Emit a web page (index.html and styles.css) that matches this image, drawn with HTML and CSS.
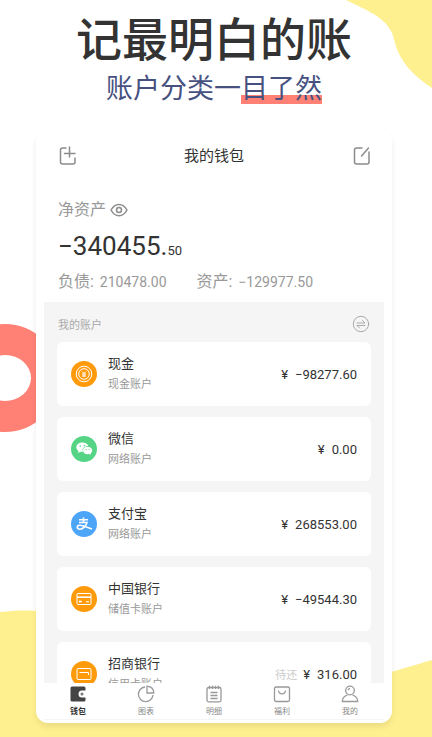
FILE: index.html
```html
<!DOCTYPE html>
<html lang="zh-CN">
<head>
<meta charset="utf-8">
<meta name="viewport" content="width=device-width, initial-scale=1">
<title>我的钱包</title>
<link rel="stylesheet" href="styles.css">
</head>
<body>
<svg class="deco deco-top" viewBox="0 0 86 88" aria-hidden="true"><path d="M0 0C13 7 38 15 46 33C50 42 49 64 86 88V0Z"/></svg>
<svg class="deco deco-ring" viewBox="0 0 60 108" aria-hidden="true"><path fill-rule="evenodd" d="M5 0a54 54 0 0 1 0 108a54 54 0 0 1 0-108ZM5 31a26 23 0 0 0 0 46a26 23 0 0 0 0-46Z"/></svg>
<svg class="deco deco-bottom" viewBox="0 0 432 127" preserveAspectRatio="none" aria-hidden="true"><path d="M0 2C24-1 48 0 70 8C150 40 220 80 300 80C345 78 390 62 432 50V127H0Z"/></svg>

<header class="hero">
  <h1>记最明白的账</h1>
  <p>账户分类一<span class="marked">目了然</span></p>
</header>

<main class="phone">
  <div class="screen">
    <div class="topbar">
      <button type="button" aria-label="添加账户">
        <svg class="line" width="18" height="20" viewBox="-2 0 18 20"><path d="M6 2H2.500Q.5 2 .5 4V16Q.5 18 2.500 18H13Q15 18 15 16V12M9.500 1V11M4.500 7.500H15"/></svg>
      </button>
      <h2>我的钱包</h2>
      <button type="button" aria-label="编辑">
        <svg class="line" width="18" height="20" viewBox="0 0 18 20"><path d="M10 2H4.500Q2.500 2 2.500 4V16Q2.500 18 4.500 18H15Q17 18 17 16V6M9.500 10L16.500 2"/></svg>
      </button>
    </div>

    <section class="summary">
      <div class="label">净资产
        <button type="button" aria-label="隐藏金额">
          <svg class="line eye" width="18" height="14" viewBox="0 0 18 14"><path d="M1 7C5-.5 13-.5 17 7C13 14.500 5 14.500 1 7Z"/><circle cx="9" cy="7" r="2.500"/></svg>
        </button>
      </div>
      <div class="total">−340455.<small>50</small></div>
      <div class="split">
        <span>负债: <b>210478.00</b></span>
        <span>资产: <b>−129977.50</b></span>
      </div>
    </section>

    <section class="accounts">
      <div class="accounts-head">
        <h3>我的账户</h3>
        <button type="button" aria-label="转账">
          <svg class="line swap" width="18" height="18" viewBox="0 0 18 18"><circle cx="9" cy="9" r="7.700"/><path d="M5 8H13L10.500 5.500M13 10.500H5L7.500 13"/></svg>
        </button>
      </div>
      <ul>
        <li>
          <svg class="badge orange" viewBox="0 0 26 26"><circle class="disc" cx="13" cy="13" r="13"/><circle cx="13" cy="13" r="7.800"/><circle cx="13" cy="13" r="5.300"/><path d="M11 10.500L13 12.500L15 10.500M11 13H15M11 15H15M13 12.500V16"/></svg>
          <div class="name"><strong>现金</strong><span>现金账户</span></div>
          <div class="amount"><i>¥</i>−98277.60</div>
        </li>
        <li>
          <svg class="badge green" viewBox="0 0 26 26"><circle class="disc" cx="13" cy="13" r="13"/><path class="solid" d="M11.500 6.500C8 6.500 5.300 8.600 5.300 11.300C5.300 12.800 6.200 14.100 7.500 15L7 17L9.300 15.800L11.800 16C10.900 12.500 13.500 10 17.300 10C16.600 8 14.400 6.500 11.500 6.500Z"/><path class="solid" d="M16.500 10.700C13.800 10.700 12 12.300 12 14.400C12 16.500 14 18.200 16.600 18.200L18.300 17.900L20 18.800L19.600 17.200C20.600 16.500 21.200 15.500 21.200 14.400C21.200 12.300 19.200 10.700 16.500 10.700Z"/><g class="dots"><circle cx="9.300" cy="10" r=".8"/><circle cx="13.300" cy="9.600" r=".8"/><circle cx="15.100" cy="13.500" r=".6"/><circle cx="18.200" cy="13.500" r=".6"/></g></svg>
          <div class="name"><strong>微信</strong><span>网络账户</span></div>
          <div class="amount"><i>¥</i>0.00</div>
        </li>
        <li>
          <svg class="badge blue" viewBox="0 0 26 26"><circle class="disc" cx="13" cy="13" r="13"/><path class="thick" d="M8 8.800H17M12.500 6.500V11.500M8 11.500H16C15 15 12 18.200 9 18.200C5.500 18.200 5.300 14.500 8.800 14.300C12 14.200 16 16.500 21 18"/></svg>
          <div class="name"><strong>支付宝</strong><span>网络账户</span></div>
          <div class="amount"><i>¥</i>268553.00</div>
        </li>
        <li>
          <svg class="badge orange" viewBox="0 0 26 26"><circle class="disc" cx="13" cy="13" r="13"/><rect x="6" y="7.500" width="14" height="11" rx="1"/><path class="thick" d="M6 11.200H20"/><path d="M15 15.800H18M9 14.200V16.800M7.800 15.500H11"/></svg>
          <div class="name"><strong>中国银行</strong><span>储值卡账户</span></div>
          <div class="amount"><i>¥</i>−49544.30</div>
        </li>
        <li>
          <svg class="badge orange" viewBox="0 0 26 26"><circle class="disc" cx="13" cy="13" r="13"/><rect x="6" y="7.500" width="14" height="11" rx="1"/><path d="M8.500 11.500H17.500V14"/></svg>
          <div class="name"><strong>招商银行</strong><span>信用卡账户</span></div>
          <div class="amount"><em>待还</em><i>¥</i>316.00</div>
        </li>
      </ul>
    </section>

    <nav class="tabs">
      <a class="active" href="#wallet"><svg viewBox="0 0 18 18"><path class="wallet" d="M3 1.500H15Q16.500 1.500 16.500 3V5.500H13A3.500 3.500 0 0 0 13 12.500H16.500V15Q16.500 16.500 15 16.500H3Q1.500 16.500 1.500 15V3Q1.500 1.500 3 1.500Z"/><circle class="clasp" cx="13" cy="9" r="1.500"/></svg>钱包</a>
      <a href="#charts"><svg viewBox="0 0 18 18"><path d="M8 2A7.300 7.300 0 1 0 16 10M10 1.200V8H16.800Q16.800 2 10 1.200Z"/></svg>图表</a>
      <a href="#details"><svg viewBox="0 0 18 18"><rect x="2" y="2.500" width="14" height="14.300" rx="1.500"/><path d="M4.500.8V4M7.500.8V4M10.500.8V4M13.500.8V4M5.500 7.500H12.500M5.500 10.500H12.500M5.500 13.500H12.500"/></svg>明细</a>
      <a href="#benefits"><svg viewBox="0 0 18 18"><rect x="1.500" y="2" width="15" height="14.500" rx="1.500"/><path d="M5.500 5.500C6 10 12 10 12.500 5.500"/></svg>福利</a>
      <a href="#me"><svg viewBox="0 0 18 18"><circle cx="9" cy="5.500" r="4.300"/><path d="M6.500 10Q1.500 11.500 1.300 16.500H16.700Q16.500 11.500 11.500 10M7 5Q7.500 3.500 9 3.300"/></svg>我的</a>
    </nav>
  </div>
</main>
</body>
</html>
```
FILE: styles.css
```css
* { box-sizing: border-box; }

body {
  margin: 0;
  height: 100vh;
  display: flex;
  flex-direction: column;
  position: relative;
  overflow: hidden;
  background: #fff;
  color: #333;
  font-family: Roboto, "Noto Sans CJK SC", sans-serif;
}

h1, h2, h3, p, ul { margin: 0; padding: 0; }
button {
  display: flex;
  padding: 0;
  border: 0;
  background: none;
}
svg { display: block; }

.deco { position: absolute; z-index: -1; fill: #fff08f; }
.deco-top { top: 0; right: 0; width: 86px; }
.deco-ring { top: 324px; left: 0; width: 60px; fill: #ff8075; }
.deco-bottom { bottom: 0; left: 0; width: 100%; height: 127px; }

.hero {
  padding: 4px 4px 0 0;
  text-align: center;
  font-family: "Noto Sans CJK SC", sans-serif;
}
.hero h1 {
  font-size: 46px;
  line-height: 64px;
  font-weight: 500;
}
.hero p {
  font-size: 27px;
  line-height: 38px;
  font-weight: 400;
  color: #47517f;
}
.marked { background: linear-gradient(#ff8075, #ff8075) 0 28px / 100% 9px no-repeat; }

.phone {
  flex: 1;
  min-height: 0;
  display: flex;
  margin: 24px 40px 14px 36px;
  padding: 0 8px 3px;
  border-radius: 12px;
  background: #fff;
  box-shadow: 0 4px 6px rgba(0, 0, 0, 0.08);
}
.screen {
  flex: 1;
  min-width: 0;
  display: flex;
  flex-direction: column;
}

.line {
  fill: none;
  stroke: #8c8c8c;
  stroke-width: 1.5;
  stroke-linecap: round;
  stroke-linejoin: round;
}
.topbar {
  display: flex;
  justify-content: space-between;
  align-items: center;
  height: 52px;
  padding: 0 14px;
}
.topbar h2 {
  font-size: 15px;
  line-height: 20px;
  font-weight: 400;
}

.summary {
  padding: 16px 14px 8px;
  color: #999;
}
.label {
  display: flex;
  align-items: center;
  gap: 4px;
  font-size: 16px;
  line-height: 24px;
}
.total {
  font-size: 26px;
  line-height: 48px;
  color: #333;
}
.total small { font-size: 13px; line-height: 1; }
.split {
  display: flex;
  gap: 30px;
  font-size: 16px;
  line-height: 24px;
}
.split b {
  margin-left: 2px;
  font-size: 14px;
  line-height: 1;
  font-weight: 400;
}

.accounts {
  flex: 1;
  min-height: 0;
  overflow: hidden;
  padding: 0 13px;
  background: #f5f5f5;
}
.accounts-head {
  display: flex;
  justify-content: space-between;
  align-items: center;
  height: 40px;
  padding: 4px 1px 0;
}
.accounts-head h3 {
  font-size: 11px;
  font-weight: 400;
  color: #aaa;
}
.swap { stroke: #aaa; stroke-width: 1; }
.accounts ul {
  display: flex;
  flex-direction: column;
  gap: 11px;
  list-style: none;
}
.accounts li {
  display: flex;
  align-items: center;
  gap: 11px;
  height: 64px;
  padding: 0 14px;
  border-radius: 6px;
  background: #fff;
}
.name {
  flex: 1;
  display: flex;
  flex-direction: column;
}
.name strong {
  font-size: 13px;
  line-height: 22px;
  font-weight: 400;
}
.name span {
  font-size: 11px;
  line-height: 20px;
  color: #999;
}
.amount { font-size: 13px; }
.amount i { margin-right: 7px; font-style: normal; }
.amount em {
  margin-right: 6px;
  font-size: 11px;
  font-style: normal;
  color: #ccc;
}

.badge {
  width: 26px;
  height: 26px;
  fill: none;
  stroke: #fff;
  stroke-width: 1;
}
.badge .disc { stroke: none; }
.badge .solid { fill: #fff; stroke: none; }
.badge .thick { stroke-width: 1.6; }
.badge .dots { fill: #55d486; stroke: none; }
.orange .disc { fill: #ff9a0a; }
.green .disc { fill: #55d486; }
.blue .disc { fill: #4da5f8; }

.tabs {
  display: grid;
  grid-template-columns: repeat(5, 1fr);
  border-bottom: 1px solid #f5f5f5;
}
.tabs a {
  display: flex;
  flex-direction: column;
  align-items: center;
  gap: 2px;
  padding: 2px 0 0;
  font-size: 8px;
  line-height: 14px;
  color: #888;
  text-decoration: none;
}
.tabs svg {
  width: 18px;
  height: 18px;
  fill: none;
  stroke: #999;
  stroke-width: 1.3;
}
.tabs .active { font-weight: 700; color: #333; }
.tabs .wallet { fill: #444; stroke: none; }
.tabs .clasp { fill: #777; stroke: none; }
```
